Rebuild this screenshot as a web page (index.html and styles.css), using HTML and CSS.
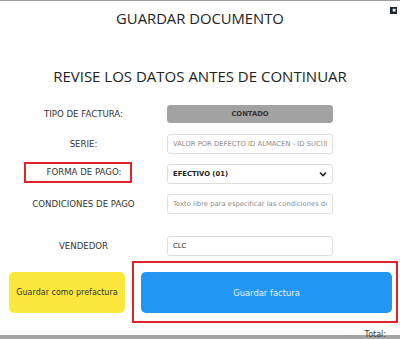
FILE: index.html
```html
<!DOCTYPE html>
<html lang="es">
<head>
    <meta charset="UTF-8">
    <meta name="viewport" content="width=device-width, initial-scale=1.0">
    <title>Guardar documento</title>
    <link rel="stylesheet" href="styles.css">
</head>
<body>

    <div class="modal">
        <button class="close-btn" title="Cerrar">&#x2716;</button>
        <h2 class="modal-title">GUARDAR DOCUMENTO</h2>
        <h3 class="modal-subtitle">REVISE LOS DATOS ANTES DE CONTINUAR</h3>

        <div class="form-grid">
            <div class="row">
                <label class="lbl">TIPO DE FACTURA:</label>
                <div class="field readonly">CONTADO</div>
            </div>
            <div class="row">
                <label class="lbl">SERIE:</label>
                <input class="field" type="text" placeholder="VALOR POR DEFECTO ID ALMACEN - ID SUCURSAL">
            </div>
            <div class="row">
                <label class="lbl"><span class="marked">FORMA DE PAGO:</span></label>
                <div class="field select">
                    <span>EFECTIVO (01)</span>
                    <svg width="8" height="6" viewBox="0 0 8 6"><path d="M1 1.5 L4 4.5 L7 1.5" fill="none" stroke="#222" stroke-width="1.6"/></svg>
                </div>
            </div>
            <div class="row row-gap">
                <label class="lbl">CONDICIONES DE PAGO</label>
                <input class="field" type="text" placeholder="Texto libre para especificar las condiciones de pago">
            </div>
            <div class="row">
                <label class="lbl">VENDEDOR</label>
                <input class="field" type="text" value="CLC">
            </div>
        </div>

        <div class="actions">
            <button class="btn btn-yellow">Guardar como prefactura</button>
            <div class="marked-box">
                <button class="btn btn-blue">Guardar factura</button>
            </div>
        </div>
    </div>

    <div class="page-footer"><span>Total:</span></div>

</body>
</html>
```

FILE: styles.css
```css
body {
    margin: 0;
    background: white;
    font-family: "DejaVu Sans", Verdana, sans-serif;
    color: #333;
    border-top: 1px solid #9a9a9a;
    height: 338px;
    overflow: hidden;
    position: relative;
}
.modal {
    position: relative;
    width: 400px;
    height: 334px;
}
.close-btn {
    position: absolute;
    top: 6px;
    right: 3px;
    width: 7px;
    height: 7px;
    padding: 0;
    border: none;
    background: #222;
    color: white;
    font-size: 5px;
    line-height: 7px;
    cursor: pointer;
}
.modal-title {
    margin: 0;
    padding-top: 6px;
    text-align: center;
    font-family: "Open Sans", sans-serif;
    font-weight: normal;
    font-size: 14.8px;
    line-height: 22px;
    color: #222;
}
.modal-subtitle {
    margin: 35px 0 0;
    text-align: center;
    font-family: "Open Sans", sans-serif;
    font-weight: normal;
    font-size: 15px;
    line-height: 24px;
    color: #222;
}
.form-grid {
    margin-top: 16px;
}
.row {
    display: grid;
    grid-template-columns: 167px 166px;
    align-items: center;
    height: 20px;
    margin-bottom: 10px;
}
.row-gap {
    margin-bottom: 22px;
}
.lbl {
    text-align: center;
    font-size: 8.6px;
    line-height: 10px;
    color: #333;
}
.marked {
    display: inline-block;
    padding: 3px 8px 4px 20px;
    margin-left: -11px;
    margin-top: -4px;
    border: 2px solid #e0242b;
}
.field {
    box-sizing: border-box;
    height: 20px;
    width: 166px;
    border: 1px solid #dedede;
    border-radius: 3px;
    background: white;
    padding: 0 5px;
    font-family: "DejaVu Sans", Verdana, sans-serif;
    font-size: 6.8px;
    color: #222;
    outline: none;
}
.field::placeholder {
    color: #8a8a8a;
}
.readonly {
    background: #a2a2a2;
    border-color: #a2a2a2;
    height: 18px;
    line-height: 16px;
    text-align: center;
    font-weight: bold;
    color: #333;
}
.select {
    display: flex;
    align-items: center;
    justify-content: space-between;
    font-weight: bold;
    color: #222;
}
.actions {
    display: flex;
    align-items: center;
    margin-top: -5px;
    padding-left: 9px;
}
.btn {
    border: none;
    border-radius: 5px;
    height: 41px;
    padding: 0;
    white-space: nowrap;
    font-family: "DejaVu Sans", Verdana, sans-serif;
    cursor: pointer;
}
.btn-yellow {
    width: 116px;
    background: #fce83b;
    color: #333;
    font-size: 8px;
}
.btn-blue {
    width: 251px;
    background: #2196f3;
    color: #e8f2fc;
    font-size: 8.4px;
}
.marked-box {
    margin-left: 7px;
    border: 2px solid #e0242b;
    padding: 9px 4px 8px 7px;
}
.page-footer {
    height: 4px;
    background: #a4a4a4;
    position: relative;
}
.page-footer span {
    position: absolute;
    right: 14px;
    top: -4px;
    font-size: 8px;
    line-height: 8px;
    color: #333;
}
```
